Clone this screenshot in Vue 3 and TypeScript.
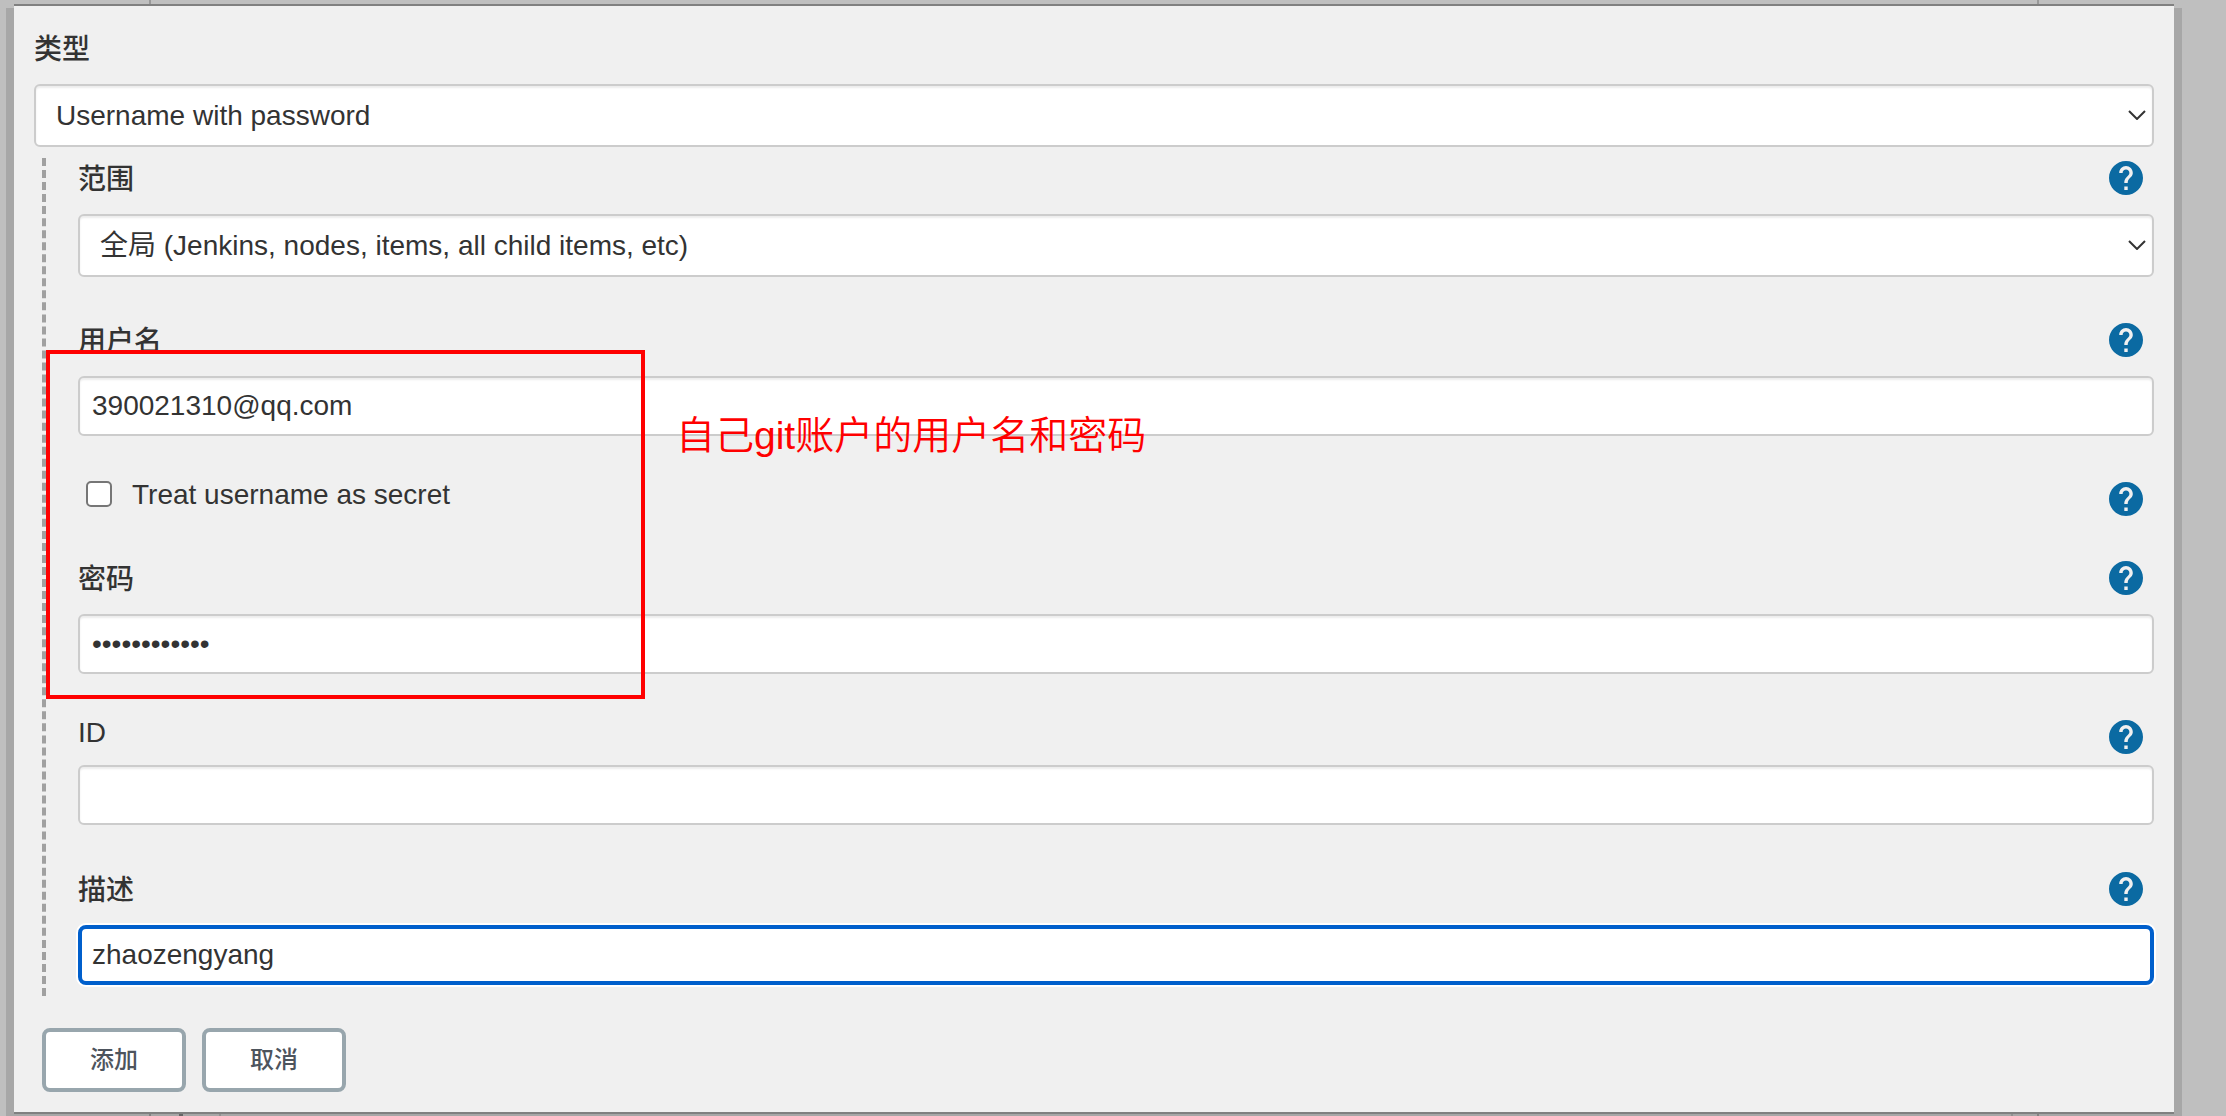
<script setup lang="ts">
import { ref } from "vue";

interface Field {
  id: string;
  label: string;
  type: "select" | "text" | "password" | "checkbox";
  value: string;
  focused?: boolean;
}

const kind = ref("Username with password");

const fields = ref<Field[]>([
  {
    id: "scope",
    label: "范围",
    type: "select",
    value: "全局 (Jenkins, nodes, items, all child items, etc)",
  },
  { id: "username", label: "用户名", type: "text", value: "390021310@qq.com" },
  { id: "secret", label: "Treat username as secret", type: "checkbox", value: "" },
  { id: "password", label: "密码", type: "password", value: "abcdefghijkl" },
  { id: "id", label: "ID", type: "text", value: "" },
  { id: "description", label: "描述", type: "text", value: "zhaozengyang", focused: true },
]);
</script>

<template>
  <div class="page">
    <i class="rule rule-left"></i>
    <i class="rule rule-right"></i>
    <div class="shadow"></div>
    <i class="tick tick-a"></i>
    <i class="tick tick-b"></i>
    <i class="tick tick-c"></i>
    <i class="tick tick-d"></i>
    <i class="tick tick-e"></i>

    <form class="dialog" @submit.prevent>
      <div class="head">
        <label class="label" for="kind">类型</label>
      </div>
      <div class="select-wrap">
        <select id="kind" v-model="kind" class="control select">
          <option>{{ kind }}</option>
        </select>
        <svg class="chevron" viewBox="0 0 18 10">
          <path d="M1 1l8 8 8-8" />
        </svg>
      </div>

      <div class="group">
        <div v-for="field in fields" :key="field.id" class="field" :class="'field-' + field.id">
          <div class="head">
            <label v-if="field.type === 'checkbox'" class="check">
              <input type="checkbox" class="box" />
              <span class="check-text">{{ field.label }}</span>
            </label>
            <label v-else class="label" :for="field.id">{{ field.label }}</label>
            <svg class="help" viewBox="2 2 20 20">
              <path
                d="M12 2C6.48 2 2 6.48 2 12s4.48 10 10 10 10-4.48 10-10S17.52 2 12 2zm1 17h-2v-2h2v2zm2.07-7.75l-.9.92C13.45 12.9 13 13.5 13 15h-2v-.5c0-1.1.45-2.1 1.17-2.83l1.24-1.26c.37-.36.59-.86.59-1.41 0-1.1-.9-2-2-2s-2 .9-2 2H8c0-2.21 1.79-4 4-4s4 1.79 4 4c0 .88-.36 1.68-.93 2.25z"
              />
            </svg>
          </div>
          <div v-if="field.type === 'select'" class="select-wrap">
            <select :id="field.id" v-model="field.value" class="control select">
              <option>{{ field.value }}</option>
            </select>
            <svg class="chevron" viewBox="0 0 18 10">
              <path d="M1 1l8 8 8-8" />
            </svg>
          </div>
          <input
            v-else-if="field.type !== 'checkbox'"
            :id="field.id"
            v-model="field.value"
            :type="field.type"
            class="control"
            :class="{ focused: field.focused }"
            autocomplete="off"
            spellcheck="false"
          />
        </div>
      </div>

      <div class="actions">
        <button type="button" class="btn">添加</button>
        <button type="button" class="btn">取消</button>
      </div>
    </form>

    <div class="mark"></div>
    <p class="note">自己git账户的用户名和密码</p>
  </div>
</template>

<style>
body {
  margin: 0;
  overflow: hidden;
}
</style>

<style scoped>
.page {
  position: relative;
  box-sizing: border-box;
  width: 2226px;
  height: 1116px;
  padding: 4px 52px 0 14px;
  overflow: hidden;
  background: #bfbfbf;
  color: #333;
  font-family: "Liberation Sans", "Noto Sans CJK SC", sans-serif;
  font-size: 28px;
}

.shadow {
  position: absolute;
  top: 8px;
  left: 6px;
  width: 2176px;
  height: 1108px;
  background: #a7a7a7;
}

.rule {
  position: absolute;
  top: 0;
  width: 2px;
  height: 4px;
  background: #999;
}

.rule-left {
  left: 149px;
}

.rule-right {
  left: 2037px;
}

/* page content peeking out under the dialog */
.tick {
  position: absolute;
  top: 1114px;
  width: 2px;
  height: 2px;
  background: #828282;
}

.tick-a {
  left: 149px;
}

.tick-b {
  left: 179px;
  width: 4px;
  background: #666;
}

.tick-c {
  left: 219px;
  background: #919191;
}

.tick-d {
  left: 2011px;
  background: #919191;
}

.tick-e {
  left: 2037px;
}

.dialog {
  position: relative;
  box-sizing: border-box;
  height: 1110px;
  padding: 25px 20px 0;
  border-top: 2px solid #808080;
  border-bottom: 2px solid #808080;
  background: #f0f0f0;
}

.head {
  display: flex;
  align-items: center;
  justify-content: space-between;
  height: 34px;
  margin-bottom: 19px;
}

.label {
  padding-top: 3px;
  font-weight: 500;
  line-height: 34px;
}

.help {
  width: 34px;
  height: 34px;
  margin-right: 11px;
  fill: #0b6aa2;
}

.control {
  display: block;
  box-sizing: border-box;
  width: 100%;
  height: 60px;
  margin: 0;
  padding: 0 12px;
  border: 2px solid #ccc;
  border-radius: 6px;
  outline: none;
  background: #fff;
  box-shadow: inset 0 2px 2px rgba(0, 0, 0, 0.075);
  color: #333;
  font: inherit;
}

.control.focused {
  padding: 0 10px;
  border: 4px solid #005fcc;
  border-radius: 8px;
  box-shadow: 0 0 0 2px #fff;
}

.select-wrap {
  position: relative;
}

.select {
  height: 63px;
  padding: 0 20px;
  appearance: none;
}

.chevron {
  position: absolute;
  top: 26px;
  right: 8px;
  width: 18px;
  height: 10px;
  fill: none;
  stroke: #333;
  stroke-width: 2;
}

.group {
  display: flex;
  flex-direction: column;
  gap: 46px;
  margin: 11px 0 0 8px;
  padding: 3px 0 11px 32px;
  border-left: 4px dashed #a0a0a0;
}

.field-secret .head {
  height: 33px;
  margin-bottom: 0;
}

.field-id {
  padding-bottom: 1px;
}

.field-id .head {
  margin-bottom: 11px;
}

.field-id .label {
  margin-top: -12px;
}

.check {
  display: flex;
  align-items: center;
  gap: 20px;
  margin: -9px 0 0 8px;
}

.check-text {
  padding-top: 2px;
}

.box {
  width: 26px;
  height: 26px;
  margin: 0;
  border: 2px solid #767676;
  border-radius: 5px;
  background: #fff;
  appearance: none;
}

.actions {
  display: flex;
  gap: 16px;
  margin: 32px 0 0 8px;
}

.btn {
  box-sizing: border-box;
  width: 144px;
  height: 64px;
  padding: 0 0 5px;
  border: 4px solid #98a6ad;
  border-radius: 8px;
  background: #fff;
  color: #4d545d;
  font-family: inherit;
  font-size: 24px;
  font-weight: 500;
}

/* red callout drawn over the form */
.mark {
  position: absolute;
  top: 350px;
  left: 46px;
  box-sizing: border-box;
  width: 599px;
  height: 349px;
  border: 4px solid #f00;
}

.note {
  position: absolute;
  top: 408px;
  left: 676px;
  margin: 0;
  color: #f00;
  font-size: 39px;
  font-weight: 350;
  line-height: 56px;
  white-space: nowrap;
}
</style>
